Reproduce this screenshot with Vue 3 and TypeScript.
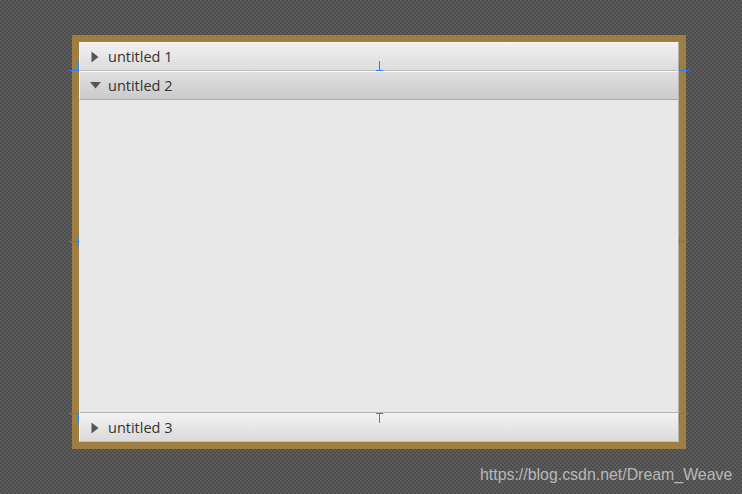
<script setup lang="ts">
interface Pane { title: string; open: boolean }
const panes: Pane[] = [
  { title: 'untitled 1', open: false },
  { title: 'untitled 2', open: true },
  { title: 'untitled 3', open: false },
]
const handles: string[] = Array.from({ length: 16 }, (_, i) => `h${i + 1}`)
</script>

<template>
  <div class="stage">
    <div class="frame">
      <div class="accordion">
        <template v-for="p in panes" :key="p.title">
          <div class="title" :class="{ open: p.open }">
            <svg class="arrow" width="12" height="12" viewBox="0 0 12 12">
              <path v-if="p.open" d="M0 2h11L5.500 8.500z" fill="#555" />
              <path v-else d="M1.500 0.500v11L8.500 6z" fill="#555" />
            </svg>
            <span class="label">{{ p.title }}</span>
          </div>
          <div v-if="p.open" class="content"></div>
        </template>
      </div>
      <i v-for="h in handles" :key="h" class="handle" :class="h"></i>
    </div>
    <div class="mark">https://blog.csdn.net/Dream_Weave</div>
  </div>
</template>

<style>
html, body { margin: 0; padding: 0; }
</style>

<style scoped>
.stage {
  position: relative;
  box-sizing: border-box;
  width: 742px;
  height: 494px;
  padding: 35px 56px 0 72px;
  overflow: hidden;
  background-color: #555;
  background-image: conic-gradient(#4d4d4d 25%, #5c5c5c 0 50%, #4d4d4d 0 75%, #5c5c5c 0);
  background-size: 4px 4px;
}
.frame {
  position: relative;
  box-sizing: border-box;
  width: 614px;
  height: 414px;
  border: 7px solid #9e7e41;
}
.accordion {
  display: flex;
  flex-direction: column;
  height: 100%;
  box-sizing: border-box;
  border-right: 1px solid #b4b4b4;
  border-bottom: 1px solid #c4c4c4;
  background: #e8e8e8;
}
.title {
  flex: none;
  box-sizing: border-box;
  height: 29px;
  display: flex;
  align-items: center;
  padding-left: 11px;
  gap: 6px;
  background: linear-gradient(#f1f1f1, #dcdcdc);
  border-top: 1px solid #fafafa;
  border-left: 1px solid #f4f4f4;
  border-bottom: 1px solid #bdbdbd;
  font-family: "Open Sans", "Noto Sans", sans-serif;
  font-size: 14.5px;
  color: #333;
}
.title.open {
  background: linear-gradient(#dfdfdf, #cbcbcb);
  border-bottom-color: #a9a9a9;
}
.title:last-child {
  border-top-color: #b4b4b4;
  border-bottom: none;
  padding-top: 1px;
  background: linear-gradient(#f3f3f3, #dadada);
}
.arrow { flex: none; margin-left: -1px; }
.label { line-height: 20px; }
.content {
  flex: 1;
  background: #e8e8e8;
}
.handle {
  position: absolute;
  background: #2a7fff;
}
/* top-left */
.h1 { left: -10px; top: 28px; width: 10px; height: 1px; }
.h2 { left: -1px; top: 19px; width: 1px; height: 9px; }
/* top-right */
.h3 { left: 600px; top: 28px; width: 10px; height: 1px; }
.h4 { left: 600px; top: 19px; width: 1px; height: 9px; }
/* top-middle */
.h5 { left: 300px; top: 19px; width: 1px; height: 9px; }
.h6 { left: 297px; top: 28px; width: 7px; height: 1px; }
/* middle-left */
.h7 { left: -10px; top: 199px; width: 10px; height: 1px; }
.h8 { left: -1px; top: 196px; width: 1px; height: 7px; }
/* middle-right */
.h9 { left: 600px; top: 199px; width: 10px; height: 1px; }
.h10 { left: 600px; top: 196px; width: 1px; height: 7px; }
/* bottom-left */
.h11 { left: -10px; top: 371px; width: 10px; height: 1px; }
.h12 { left: -1px; top: 371px; width: 1px; height: 10px; }
/* bottom-right */
.h13 { left: 600px; top: 371px; width: 10px; height: 1px; }
.h14 { left: 600px; top: 371px; width: 1px; height: 10px; }
/* bottom-middle */
.h15 { left: 297px; top: 371px; width: 7px; height: 1px; }
.h16 { left: 300px; top: 371px; width: 1px; height: 10px; }
.mark {
  position: absolute;
  left: 480px;
  top: 465px;
  font-family: "Liberation Sans", sans-serif;
  font-size: 15.9px;
  line-height: 20px;
  color: #b8b8b8;
  white-space: nowrap;
}
</style>
